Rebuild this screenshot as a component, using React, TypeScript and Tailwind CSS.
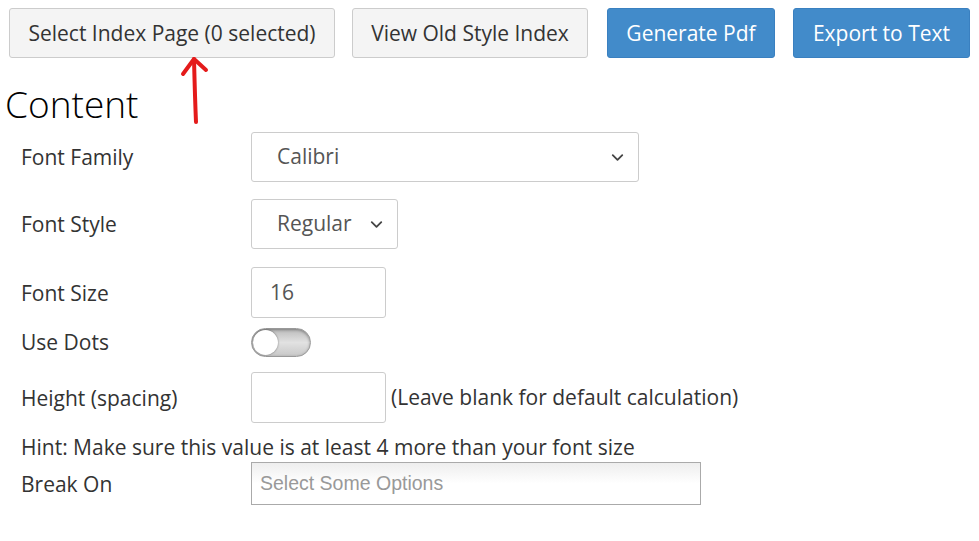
import { ChevronDown } from "lucide-react";

const font = { fontFamily: '"Open Sans", "Liberation Sans", sans-serif' };

function FakeSelect({ value, width }: { value: string; width: string }) {
  return (
    <div
      className={`flex h-[50px] ${width} items-center justify-between rounded-[3px] border border-[#ccc] bg-white pl-[25px] pr-[11px] text-[21px] text-[#555]`}
    >
      <span>{value}</span>
      <ChevronDown className="h-[19px] w-[19px] text-[#444]" strokeWidth={2.3} />
    </div>
  );
}

function Row({ label, children, className = "" }: { label: string; children: React.ReactNode; className?: string }) {
  return (
    <div className={`flex items-center ${className}`}>
      <div className="w-[230px] shrink-0 text-[21px] leading-[30px] text-[#333]">{label}</div>
      {children}
    </div>
  );
}

export default function App() {
  return (
    <div className="relative min-h-[541px] w-[979px] bg-white" style={font}>
      {/* toolbar */}
      <div className="flex gap-[17px] pl-[9px] pt-[8px]">
        <button className="h-[50px] w-[326px] rounded-[3px] border border-[#ccc] bg-[#f4f4f4] pt-[2px] text-[21px] text-[#333]">
          Select Index Page (0 selected)
        </button>
        <button className="h-[50px] w-[236px] rounded-[3px] border border-[#ccc] bg-[#f4f4f4] pt-[2px] text-[21px] text-[#333]">
          View Old Style Index
        </button>
        <button className="ml-[2px] h-[50px] w-[168px] rounded-[3px] border border-[#3a80c0] bg-[#428bca] pt-[2px] text-[21px] text-white">
          Generate Pdf
        </button>
        <button className="ml-[1px] h-[50px] w-[177px] rounded-[3px] border border-[#3a80c0] bg-[#428bca] pt-[2px] text-[21px] text-white">
          Export to Text
        </button>
      </div>

      {/* annotation arrow */}
      <svg className="absolute left-[178px] top-[54px]" width="34" height="72" viewBox="0 0 34 72">
        <path d="M16 5 C16.5 25 17 45 18 68" stroke="#e41b1b" strokeWidth="4" strokeLinecap="round" fill="none" />
        <path d="M5 20 L16 5 L28 16" stroke="#e41b1b" strokeWidth="4" strokeLinecap="round" strokeLinejoin="round" fill="none" />
      </svg>

      <h1 className="ml-[5px] mt-[22px] text-[37px] font-light leading-[48px] text-black">Content</h1>

      <div className="ml-[21px] mt-[4px] flex flex-col">
        <Row label="Font Family">
          <FakeSelect value="Calibri" width="w-[388px]" />
        </Row>
        <Row label="Font Style" className="mt-[17px]">
          <FakeSelect value="Regular" width="w-[147px]" />
        </Row>
        <Row label="Font Size" className="mt-[18px]">
          <div className="flex h-[51px] w-[135px] items-center rounded-[3px] border border-[#ccc] bg-white pl-[18px] text-[21px] text-[#555]">
            16
          </div>
        </Row>
        <Row label="Use Dots" className="mt-[9px]">
          <div className="relative h-[29px] w-[60px] rounded-full border border-[#999] bg-gradient-to-b from-[#bbb] via-[#e2e2e2] to-[#c8c8c8] shadow-[inset_0_1px_3px_rgba(0,0,0,0.35)]">
            <div className="absolute left-[1px] top-[1px] h-[25px] w-[25px] rounded-full bg-white shadow-[0_0_2px_rgba(0,0,0,0.5)]" />
          </div>
        </Row>
        <Row label="Height (spacing)" className="mt-[15px]">
          <div className="h-[51px] w-[135px] rounded-[3px] border border-[#ccc] bg-white" />
          <span className="ml-[5px] text-[21px] text-[#333]">(Leave blank for default calculation)</span>
        </Row>
        <div className="mt-[9px] text-[21px] leading-[30px] text-[#333]">
          Hint: Make sure this value is at least 4 more than your font size
        </div>
        <Row label="Break On">
          <div
            className="flex h-[43px] w-[450px] items-center border border-[#aaa] bg-gradient-to-b from-[#eee] via-white to-white pl-[8px] text-[19.5px] text-[#999]"
            style={{ fontFamily: '"Liberation Sans", Arial, sans-serif' }}
          >
            Select Some Options
          </div>
        </Row>
      </div>
    </div>
  );
}
